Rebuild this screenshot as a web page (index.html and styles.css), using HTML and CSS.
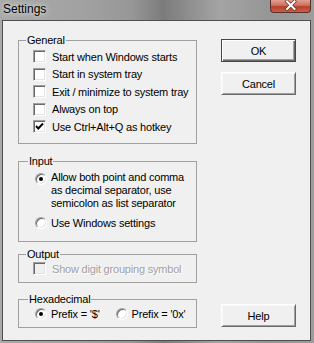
FILE: index.html
```html
<!DOCTYPE html>
<html lang="en">
<head>
  <meta charset="UTF-8">
  <title>Settings</title>
  <link rel="stylesheet" href="styles.css">
</head>
<body>

  <div class="window">
    <div class="titlebar">
      <div class="title">Settings</div>
      <div class="close">
        <svg width="41" height="13" viewBox="0 0 41 13">
          <path d="M17 2.5 L24.5 10 M24.5 2.5 L17 10" stroke="#6b2a22" stroke-width="3.4" stroke-linecap="square"/>
          <path d="M17 2.5 L24.5 10 M24.5 2.5 L17 10" stroke="#fff" stroke-width="2" stroke-linecap="square"/>
        </svg>
      </div>
    </div>

    <div class="client">
      <div class="groups">

        <fieldset class="group general">
          <legend>General</legend>
          <div class="option"><span class="box"></span>Start when Windows starts</div>
          <div class="option"><span class="box"></span>Start in system tray</div>
          <div class="option"><span class="box"></span>Exit / minimize to system tray</div>
          <div class="option"><span class="box"></span>Always on top</div>
          <div class="option">
            <span class="box">
              <svg width="9" height="9" viewBox="0 0 9 9"><path d="M1 4 L3.3 6.5 L8 1.5" stroke="#000" stroke-width="1.9" fill="none"/></svg>
            </span>Use Ctrl+Alt+Q as hotkey
          </div>
        </fieldset>

        <fieldset class="group input">
          <legend>Input</legend>
          <div class="option multi"><span class="radio on"></span><span>Allow both point and comma<br>as decimal separator, use<br>semicolon as list separator</span></div>
          <div class="option"><span class="radio"></span>Use Windows settings</div>
        </fieldset>

        <fieldset class="group output">
          <legend>Output</legend>
          <div class="option disabled"><span class="box"></span>Show digit grouping symbol</div>
        </fieldset>

        <fieldset class="group hex">
          <legend>Hexadecimal</legend>
          <div class="hex-row">
            <div class="option"><span class="radio on"></span>Prefix = '$'</div>
            <div class="option"><span class="radio"></span>Prefix = '0x'</div>
          </div>
        </fieldset>

      </div>

      <div class="buttons">
        <div class="btn default">OK</div>
        <div class="btn">Cancel</div>
        <div class="btn help">Help</div>
      </div>
    </div>
  </div>

</body>
</html>
```

FILE: styles.css
```css
* {
  box-sizing: border-box;
}

html, body {
  margin: 0;
  padding: 0;
}

body {
  width: 314px;
  height: 343px;
  overflow: hidden;
  font-family: "Liberation Sans", Arial, sans-serif;
  font-size: 11px;
  color: #000;
}

.window {
  width: 314px;
  height: 343px;
  display: flex;
  flex-direction: column;
  padding: 0 3px 2px 2px;
  background: linear-gradient(90deg, #a9a9a9 0%, #a2a2a2 25%, #979797 42%, #7c7c7c 52%, #8e8e8e 60%, #a4a4a4 70%, #969696 85%, #9c9c9c 100%);
}

/* title bar */
.titlebar {
  height: 20px;
  flex: none;
  display: flex;
  justify-content: space-between;
  align-items: flex-start;
}

.title {
  font-size: 12px;
  line-height: 14px;
  padding: 2px 0 0 1px;
  color: #000;
  text-shadow: 0 0 4px rgba(255, 255, 255, 0.8), 0 0 8px rgba(255, 255, 255, 0.5);
}

.close {
  width: 41px;
  height: 13px;
  border: 1px solid #5a2f2a;
  border-top: none;
  border-radius: 0 0 4px 4px;
  background: linear-gradient(#e0a092 0%, #d0705e 45%, #b8402c 55%, #c8604a 100%);
  overflow: hidden;
}

.close svg {
  display: block;
  margin: -1px 0 0 -1px;
}

/* dialog area */
.client {
  flex: 1;
  display: flex;
  gap: 24px;
  background: #f0f0f0;
  border: 1px solid #4e4e4e;
  padding: 0 14px 12px 15px;
  letter-spacing: -0.2px;
}

.groups {
  width: 179px;
  flex: none;
}

.group {
  margin: 0;
  border: 1px solid #a0a0a0;
  padding: 1px 6px 6px 14px;
  min-width: 0;
}

.group legend {
  padding: 0 1px;
  margin-left: -7px;
  line-height: 13px;
}

.general {
  margin-top: 13px;
  padding-bottom: 7px;
}

.input {
  margin-top: 11px;
  padding-top: 3px;
  padding-bottom: 11px;
  padding-left: 16px;
}

.output {
  margin-top: 6px;
}

.hex {
  margin-top: 10px;
  padding-left: 16px;
}

.option {
  display: flex;
  align-items: center;
  height: 17.5px;
  white-space: nowrap;
}

.output .option,
.hex .option {
  height: 14px;
}

.option.multi {
  height: auto;
  align-items: flex-start;
  line-height: 13px;
  margin-bottom: 7px;
}

.input .option:last-child {
  height: 13px;
}

.option.multi .radio {
  margin-top: 2px;
}

.hex-row {
  display: flex;
  gap: 16px;
}

/* checkbox */
.box {
  width: 13px;
  height: 13px;
  flex: none;
  margin-right: 6px;
  background: #fff;
  border: 1px solid;
  border-color: #a0a0a0 #fff #fff #a0a0a0;
  box-shadow: inset 1px 1px #696969, inset -1px -1px #e3e3e3;
  display: flex;
  align-items: center;
  justify-content: center;
}

.box svg {
  display: block;
}

.disabled {
  color: #a0a0a0;
  text-shadow: 1px 1px #fff;
}

.disabled .box {
  background: #f0f0f0;
}

/* radio */
.radio {
  width: 12px;
  height: 12px;
  flex: none;
  margin-right: 4px;
  border-radius: 50%;
  background: #fff;
  border: 1px solid;
  border-color: #a0a0a0 #fff #fff #a0a0a0;
  box-shadow: inset 1px 1px #696969, inset -1px -1px #e3e3e3;
  display: flex;
  align-items: center;
  justify-content: center;
}

.radio.on::after {
  content: "";
  width: 4px;
  height: 4px;
  border-radius: 50%;
  background: #000;
}

/* buttons */
.buttons {
  width: 75px;
  flex: none;
  display: flex;
  flex-direction: column;
  padding-top: 18px;
}

.btn {
  height: 23px;
  flex: none;
  display: flex;
  align-items: center;
  justify-content: center;
  background: #f0f0f0;
  border: 1px solid;
  border-color: #fff #696969 #696969 #fff;
  box-shadow: inset 1px 1px #f8f8f8, inset -1px -1px #a0a0a0;
}

.btn + .btn {
  margin-top: 10px;
}

.btn.default {
  border: 1px solid #464646;
  box-shadow: inset 1px 1px #fff, inset -1px -1px #696969, inset -2px -2px #a0a0a0;
}

.btn.help {
  margin-top: auto;
  margin-bottom: 1px;
}
```
